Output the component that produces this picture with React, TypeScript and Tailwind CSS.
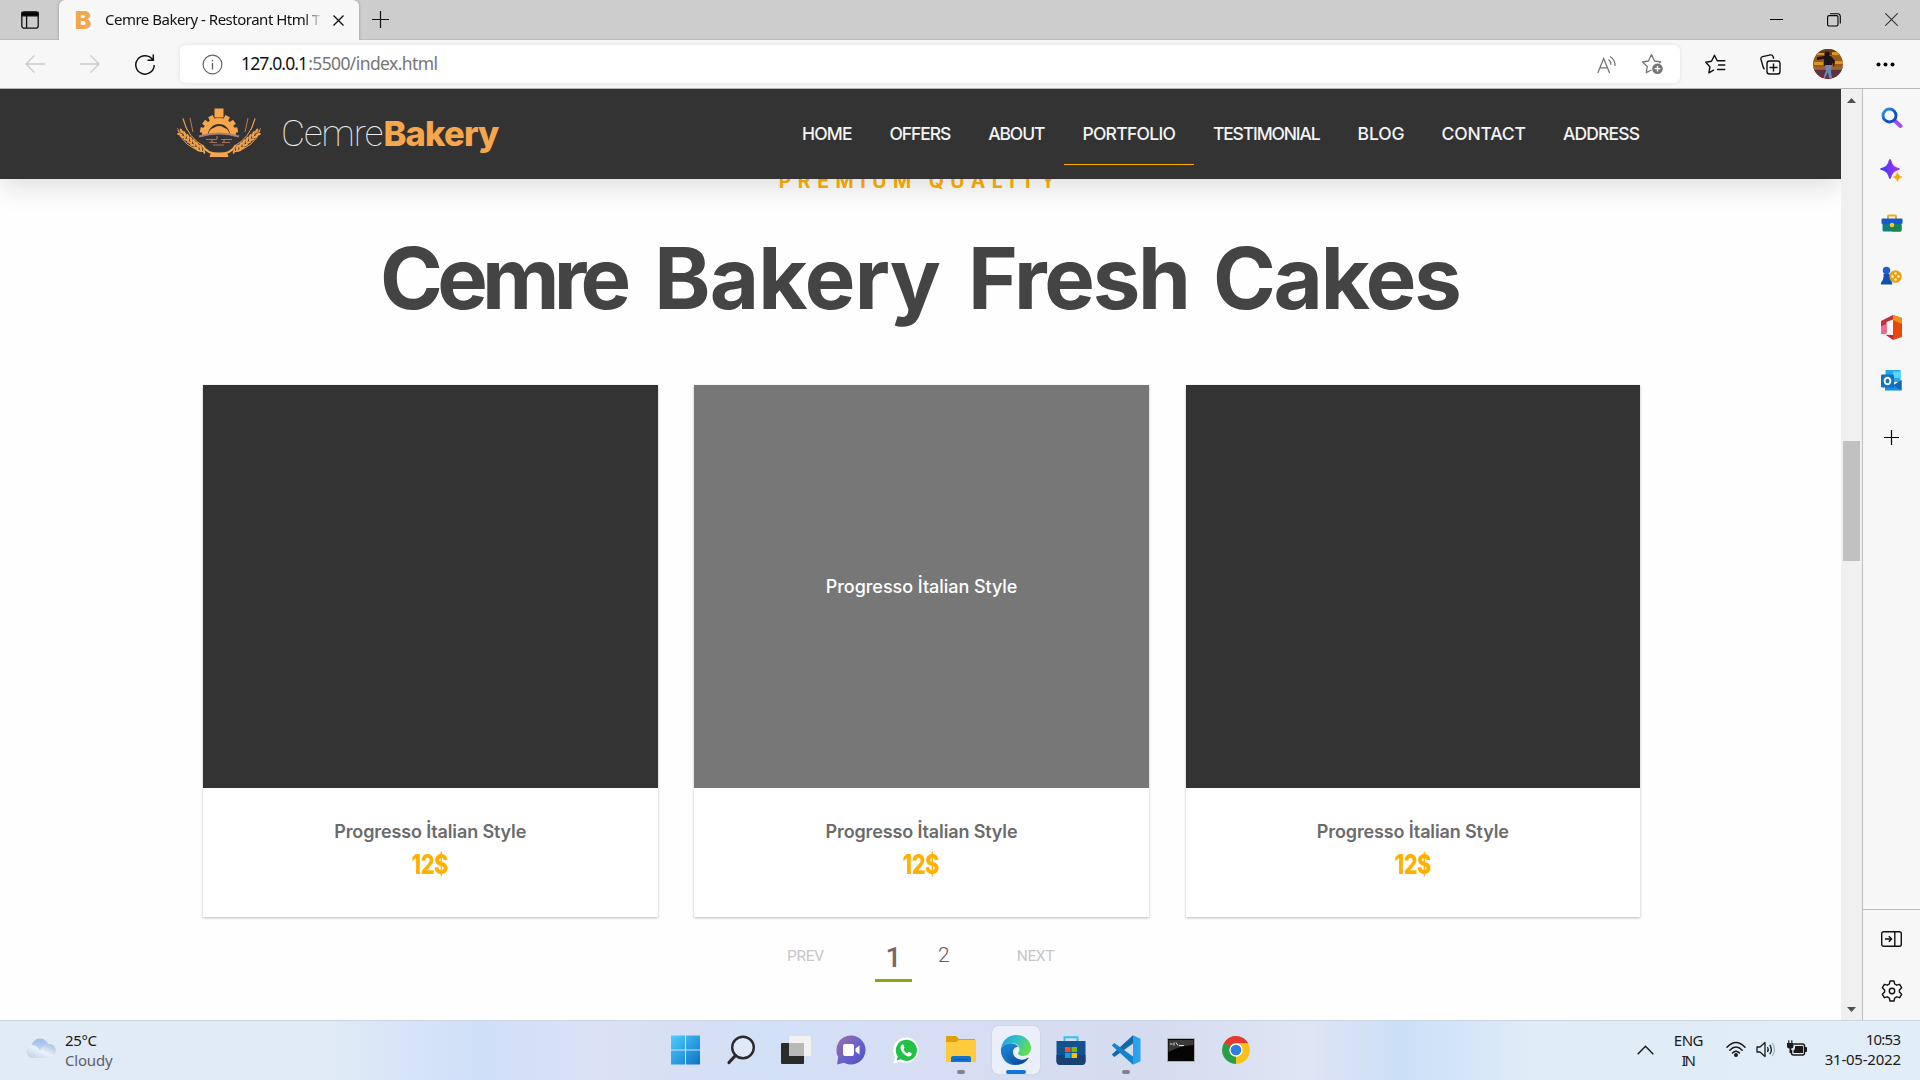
import React, { useLayoutEffect, useRef } from "react";

/* Single-line text whose tracking is adjusted so that it fills a given width. */
function Fit({ w, className = "", children }: { w: number; className?: string; children: string }) {
  const ref = useRef<HTMLSpanElement>(null);
  useLayoutEffect(() => {
    const el = ref.current;
    if (!el) return;
    el.style.letterSpacing = "0px";
    const natural = el.offsetWidth;
    const gap = (w - natural) / (children.length - 1 || 1);
    el.style.letterSpacing = `${gap}px`;
    el.style.marginRight = `${-gap}px`;
  }, [w, children]);
  return (
    <span ref={ref} className={"inline-block whitespace-pre " + className}>
      {children}
    </span>
  );
}

function TitleBar() {
  return (
    <div className="flex h-10 shrink-0 items-stretch border-b border-[#bdbdbd] bg-[#cdcdcd]">
      <div className="flex w-[59px] items-center pl-[21px]">
        <svg width="18" height="18" viewBox="0 0 18 18" fill="none" stroke="#111" strokeWidth="1.3">
          <rect x=".8" y=".8" width="16.4" height="16.4" rx="2.5" />
          <path d="M1 1.5h16v3.4H1z" fill="#000" />
          <path d="M5.6 5v12" />
        </svg>
      </div>
      <div className="-mb-px flex w-[300px] items-center rounded-t-md bg-[#f7f7f7] pl-[14px] shadow-[0_0_3px_rgba(0,0,0,0.3)] [clip-path:inset(-3px_-3px_0_-3px)]">
        <div className="flex h-5 w-5 items-center justify-center bg-white font-['Inter'] text-[25px] leading-5 font-black text-[#f7a64c]">B</div>
        <div className="ml-3 h-6 w-[217px] [mask-image:linear-gradient(90deg,#000_92%,transparent)]">
          <Fit w={215} className="-translate-y-px font-['Noto_Sans'] text-[15px] leading-6 text-[#111]">Cemre Bakery - Restorant Html T</Fit>
        </div>
        <svg className="ml-[11px]" width="11" height="11" viewBox="0 0 11 11" stroke="#111" strokeWidth="1.4">
          <path d="M.5.5l10 10M10.5.5l-10 10" />
        </svg>
      </div>
      <div className="flex items-center pl-[13px]">
        <svg width="17" height="17" viewBox="0 0 17 17" stroke="#111" strokeWidth="1.2">
          <path d="M8.5 0v17M0 8.5h17" />
        </svg>
      </div>
      <div className="ml-auto flex items-center pr-[22px]">
        <svg className="mr-[44px]" width="13" height="13" viewBox="0 0 13 13" stroke="#000"><path d="M0 6.5h13" /></svg>
        <svg className="mr-[44px]" width="14" height="14" viewBox="0 0 14 14" fill="none" stroke="#000" strokeWidth="1.1">
          <rect x=".6" y="2.6" width="10.4" height="10.4" rx="1.5" />
          <path d="M3 .7h7.5q2.8 0 2.8 2.8v7" />
        </svg>
        <svg width="13" height="13" viewBox="0 0 13 13" stroke="#333" strokeWidth="1.1"><path d="M.3.3l12.4 12.4M12.7.3L.3 12.7" /></svg>
      </div>
    </div>
  );
}

function Avatar() {
  return (
    <svg width="30" height="30" viewBox="0 0 30 30">
      <clipPath id="av"><circle cx="15" cy="15" r="15" /></clipPath>
      <g clipPath="url(#av)">
        <path fill="#9a5a18" d="M0 0h30v30H0z" />
        <path fill="#6d3a12" d="M0 0h30v6H0z" />
        <path fill="#d8951f" d="M4 4h8v2H4zM19 3h7v3h-7zM1 13h9v3H1zM21 12h9v3h-9z" />
        <path fill="#5b3443" d="M0 21h30v9H0z" />
        <path fill="#a0643a" d="M0 18h30v2H0z" />
        <circle cx="14" cy="5" r="2.6" fill="#20130f" />
        <path fill="#1d1519" d="M4 8l7-1h7l4 5-1 6-2-5v4h-8v-7l-7 1z" />
        <path fill="#6f86b8" d="M12 16h7l-1 7 1 6h-3l-1-6-3 6h-2l3-7z" />
        <path fill="#b01225" d="M7 27h4v2H7z" />
      </g>
    </svg>
  );
}

function Toolbar() {
  return (
    <div className="flex h-[49px] shrink-0 items-center border-b border-[#b5b5b5] bg-[#f7f7f7]">
      <div className="flex w-[180px] items-center pl-[25px]">
        <svg width="20" height="18" viewBox="0 0 20 18" fill="none" stroke="#cacaca" strokeWidth="1.3"><path d="M20 9H1M9.5.5L1 9l8.5 8.5" /></svg>
        <svg className="ml-[35px]" width="20" height="18" viewBox="0 0 20 18" fill="none" stroke="#cacaca" strokeWidth="1.3"><path d="M0 9h19M10.5.5L19 9l-8.5 8.5" /></svg>
        <svg className="ml-[35px]" width="20" height="21" viewBox="0 0 20 21" fill="none" stroke="#111" strokeWidth="1.5"><path d="M17.8 6A9.2 9.2 0 1 0 19.2 11M18.3.5v5.800h-5.800" /></svg>
      </div>
      <div className="flex h-[38px] w-[1500px] items-center rounded-md bg-white pl-[22px] shadow-[0_0_4px_rgba(0,0,0,0.1)]">
        <svg width="21" height="21" viewBox="0 0 21 21" fill="none" stroke="#666" strokeWidth="1.2">
          <circle cx="10.5" cy="10.5" r="9.4" />
          <path d="M10.5 9v6.500M10.5 5.700v1.500" strokeWidth="1.4" />
        </svg>
        <div className="-mt-[3px] ml-[18px] flex font-['Noto_Sans'] text-[17.5px] leading-6">
          <Fit w={67} className="text-[#111]">127.0.0.1</Fit>
          <Fit w={130} className="text-[#757575]">:5500/index.html</Fit>
        </div>
        <div className="mr-[16px] ml-auto flex items-center">
          <svg width="20" height="19" viewBox="0 0 20 19" fill="none" stroke="#777" strokeWidth="1.3">
            <path d="M.8 18L6.700 3.500 12.600 18M3 12.800h7.500M11.500 4.500q2.500 2 2.300 5.200M13 1.500q5.500 3.500 5 9.500" />
          </svg>
          <svg className="ml-[24px]" width="23" height="22" viewBox="0 0 23 22" fill="none" stroke="#777" strokeWidth="1.3" strokeLinejoin="round">
            <path d="M10.500 17l-5.200 2.700 1-6.300L1.500 9l6-1 3-6.500 3 6.500 6.200.8-1.500 1.500" />
            <circle cx="16.500" cy="15.700" r="5.300" fill="#777" stroke="none" />
            <path d="M16.500 12.900v5.600M13.700 15.700h5.600" stroke="#fff" />
          </svg>
        </div>
      </div>
      <div className="flex flex-1 items-center pl-[25px]">
        <svg width="21" height="20" viewBox="0 0 21 20" fill="none" stroke="#111" strokeWidth="1.4" strokeLinejoin="round" strokeLinecap="round">
          <path d="M8.500 16.200l-4.600 2.600 1-6L.8 8.300l5.700-1L9.500 1.200l2.700 5.500h7.600M13.500 11h6.300M12.500 15.500h7.300" />
        </svg>
        <svg className="ml-[34px]" width="21" height="21" viewBox="0 0 21 21" fill="none" stroke="#111" strokeWidth="1.4">
          <rect x="7" y="7" width="13" height="13" rx="2.5" />
          <path d="M13.500 9.500v8M9.500 13.500h8M4.500 15.200Q3.300 14 3 12.500L.9 5.200Q.6 3.300 2.600 2.600L10.500.9q1.800-.2 2.600 1.600l.6 2.200" />
        </svg>
        <div className="ml-[32px]"><Avatar /></div>
        <div className="ml-[34px] flex gap-[4px]">
          {[0, 1, 2].map((i) => <i key={i} className="h-[3px] w-[3px] rounded-full bg-black ring-[0.5px] ring-black" />)}
        </div>
      </div>
    </div>
  );
}

function Emblem() {
  const grains = [0, 1, 2, 3, 4, 5, 6];
  const wheat = (
    <g fill="#f2a24b">
      <path d="M1 22q5 17 26 22M6 11q5 19 22 28" fill="none" stroke="#f2a24b" strokeWidth="1" />
      {grains.map((i) => (
        <g key={i} transform={`translate(${4.5 + i * 3.2} ${23 + i * 2.7})`}>
          <ellipse rx="2.800" ry="1.200" transform="rotate(62)" />
          <ellipse cx="-.5" cy="3.700" rx="2.900" ry="1.100" transform="rotate(18)" />
          <ellipse cx="5" cy="-1.800" rx="2.600" ry="1" transform="rotate(72)" />
        </g>
      ))}
      <path d="M0 20l4 5M6 10l4 12M13 10l3 14" stroke="#f2a24b" strokeWidth=".7" />
    </g>
  );
  return (
    <svg width="84" height="50" viewBox="0 0 84 50">
      {wheat}
      <g transform="translate(84 0) scale(-1 1)">{wheat}</g>
      <circle cx="42" cy="27" r="19" fill="#333" />
      <path d="M25 27a17 17 0 0 1 34 0h-6a11 11 0 0 0-22 0z" fill="#f7a64c" />
      {[-80, -54, -27, 0, 27, 54, 80].map((a) => (
        <path key={a} d={a === 0 ? "M37.500.500h9v9h-9z" : "M39.500 6h5v5h-5z"} fill="#f7a64c" transform={`rotate(${a} 42 25)`} />
      ))}
      <path d="M31.500 26q1-5 5-6 6-4 11 0 4 1 5 6z" fill="#f7a64c" />
      <path d="M44 13q5 2 6 6" stroke="#f7a64c" fill="none" />
      <path d="M22 28.500q20-6 40 0" fill="none" stroke="#a98078" strokeWidth="2" />
      <path d="M29 31.500h11m4 0h11M32 34.500h8m5 0h8M36 37h11M40 28v3m-5 0v3m12-3v3" fill="none" stroke="#a3705a" strokeWidth="1.200" />
      <path d="M25 37q5 9 17 9t17-9" fill="none" stroke="#f7a64c" strokeWidth="2" />
      <path d="M34 44.500h16l1.500 4.500h-19z" fill="#f7a64c" />
    </svg>
  );
}

const NAV = [
  { label: "HOME", w: 50.5 },
  { label: "OFFERS", w: 61.5 },
  { label: "ABOUT", w: 57.5 },
  { label: "PORTFOLIO", w: 93.3, active: true },
  { label: "TESTIMONIAL", w: 107.5 },
  { label: "BLOG", w: 46.5 },
  { label: "CONTACT", w: 84 },
  { label: "ADDRESS", w: 77 },
];

function SiteHeader() {
  return (
    <header className="relative z-10 flex h-[90px] shrink-0 bg-[#333] pl-[177px] shadow-[0_8px_26px_rgba(0,0,0,0.13)]">
      <div className="flex w-[607px] pt-[19px]">
        <Emblem />
        <div className="mt-px ml-[20px] flex leading-[50px]">
          <Fit w={102} className="font-['Roboto'] text-[37px] font-thin text-[#eee]">Cemre</Fit>
          <Fit w={116} className="font-['Inter'] text-[34.5px] font-extrabold text-[#f7a64c]">Bakery</Fit>
        </div>
      </div>
      <nav className="flex h-[76px]">
        {NAV.map((n) => (
          <a key={n.label} className={"mr-px flex items-center border-b px-[18px] pt-[15px] leading-[30px] " + (n.active ? "border-[#ffab00]" : "border-transparent")}>
            <Fit w={n.w} className="font-['Inter'] text-[17.5px] font-medium text-[#f4f4f4]">{n.label}</Fit>
          </a>
        ))}
      </nav>
    </header>
  );
}

function Card({ hover }: { hover?: boolean }) {
  return (
    <article className="h-[532px] w-[454.6px] bg-white text-center shadow-[0_1px_3px_rgba(0,0,0,0.12),0_1px_2px_rgba(60,80,120,0.24)]">
      <div className={"flex h-[403px] items-center justify-center " + (hover ? "bg-[#777]" : "bg-[#333]")}>
        {hover && <Fit w={192} className="font-['Inter'] text-[18px] leading-6 font-medium text-white">Progresso İtalian Style</Fit>}
      </div>
      <h3 className="mt-[32px] h-6 leading-6">
        <Fit w={192} className="font-['Inter'] text-[18px] font-semibold text-[#6b6b6b]">Progresso İtalian Style</Fit>
      </h3>
      <p className="mt-[6px] pr-px leading-[30px]">
        <span className="inline-block scale-x-[0.8] font-['Inter'] text-[27px] font-extrabold tracking-[-0.5px] text-[#ffb000]">12$</span>
      </p>
    </article>
  );
}

function Site() {
  return (
    <div className="flex min-w-0 flex-1 flex-col overflow-hidden bg-[#fefefe]">
      <SiteHeader />
      <main>
        <p className="-mt-[10px] flex h-6 -translate-x-[5px] justify-center pl-[3px] leading-6">
          <Fit w={277} className="font-['Inter'] text-[19.5px] font-bold text-[#ffb000]">PREMIUM QUALITY</Fit>
        </p>
        <h1 className="mt-[31px] flex h-[110px] pl-[380px] font-['Inter'] text-[85px] leading-[110px] font-bold text-[#444]">
          <Fit w={251}>Cemre</Fit>
          <Fit className="ml-[23px]" w={287}>Bakery</Fit>
          <Fit className="ml-[27px]" w={223}>Fresh</Fit>
          <Fit className="ml-[22px]" w={249}>Cakes</Fit>
        </h1>
        <div className="mt-[51px] flex gap-[36.7px] pl-[203px]">
          <Card />
          <Card hover />
          <Card />
        </div>
        <div className="flex h-[65px] pl-[787px] font-['Roboto'] leading-[30px]">
          <span className="w-[37px] pt-[24px]"><Fit w={37} className="text-[15.5px] text-[#c6c6c6]">PREV</Fit></span>
          <span className="ml-[51px] w-[37px] border-b-[3px] border-[#85aa0a] pt-[26px] text-center text-[28px] font-medium text-[#7b6767]">1</span>
          <span className="ml-[26px] pt-[23px] text-[21px] font-light text-[#6b5757]">2</span>
          <span className="ml-[67px] pt-[24px]"><Fit w={38} className="text-[15.5px] text-[#c6c6c6]">NEXT</Fit></span>
        </div>
      </main>
    </div>
  );
}

function Scrollbar() {
  return (
    <div className="flex w-[22px] flex-col items-center border-r border-[#bcbcbc] bg-[#f0f0f0]">
      <svg className="mt-[9px]" width="9" height="5" viewBox="0 0 9 5"><path d="M0 5L4.500 0 9 5z" fill="#505050" /></svg>
      <div className="mt-[338px] h-[120px] w-[17px] bg-[#c1c1c1]" />
      <svg className="mt-auto mb-[8px]" width="9" height="5" viewBox="0 0 9 5"><path d="M0 0l4.500 5L9 0z" fill="#505050" /></svg>
    </div>
  );
}

function Sidebar() {
  return (
    <aside className="flex w-[57px] flex-col items-center bg-[#f7f7f7]">
      <svg className="mt-[18px]" width="22" height="22" viewBox="0 0 22 22" fill="none">
        <defs><linearGradient id="sg" x1="0" y1="0" x2="1" y2="1"><stop stopColor="#2ea1e6" /><stop offset=".6" stopColor="#0b4fc4" /></linearGradient></defs>
        <path d="M14 14l5.500 5" stroke="#a14cf0" strokeWidth="4" strokeLinecap="round" />
        <circle cx="8.500" cy="8.500" r="6.500" fill="#fff" stroke="url(#sg)" strokeWidth="2.900" />
      </svg>
      <svg className="mt-[30px]" width="23" height="23" viewBox="0 0 23 23">
        <defs><linearGradient id="pg"><stop stopColor="#3b3bff" /><stop offset="1" stopColor="#b52ee8" /></linearGradient></defs>
        <path d="M10 0q1 0 2 4 1.300 3.500 5 4.500 3 .8 3 1.500t-3 1.500q-3.700 1-5 4.500-1 4-2 4t-2-4q-1.300-3.500-5-4.500-3-.8-3-1.500t3-1.500q3.700-1 5-4.500 1-4 2-4z" fill="url(#pg)" />
        <path d="M17.500 13.500q.9 3.700 4.500 4.500-3.600.8-4.500 4.500-.9-3.700-4.500-4.500 3.600-.8 4.500-4.500z" fill="#f2a900" stroke="#f2a900" strokeWidth=".6" />
      </svg>
      <svg className="mt-[31px]" width="22" height="20" viewBox="0 0 22 20">
        <path d="M7 6V3.500Q7 2.500 8 2.500h6q1 0 1 1V6" fill="none" stroke="#eda91d" strokeWidth="2" />
        <rect x="1.500" y="7" width="19" height="11.500" rx="1.500" fill="#0f7f80" /><path d="M11 12h9.500v5q0 1.500-1.500 1.500h-8z" fill="#16864a" />
        <rect x=".5" y="5.500" width="21" height="5.500" rx="1.300" fill="#1757cf" /><circle cx="11" cy="12" r="2.300" fill="#ffc527" />
      </svg>
      <svg className="mt-[33px]" width="23" height="20" viewBox="0 0 23 20">
        <circle cx="15.500" cy="10.500" r="6.300" fill="#e9a018" />
        {[[15.5, 7.5], [15.5, 13.5], [12.5, 10.5], [18.5, 10.5]].map(([x, y]) => <circle key={`${x}-${y}`} cx={x} cy={y} r="1.200" fill="#fff3c9" />)}
        <circle cx="6.500" cy="4.500" r="3.700" fill="#1d5fd0" />
        <path d="M3.500 8h6q-.5 5 2 7.500.8 1 .8 3H.8q0-2 1-3Q4 13 3.500 8z" fill="#124fae" />
      </svg>
      <svg className="mt-[29px]" width="21" height="25" viewBox="0 0 21 25">
        <path d="M0 6l12-6v4.500L5.500 7v11.500L0 19z" fill="#c3303a" /><path d="M0 19V11l5.500-2v9z" fill="#ec6b9a" />
        <path d="M12 0l9 3v19l-9 3V5z" fill="#e8480c" /><path d="M12 0l9 3v6l-9-4z" fill="#f49010" />
        <path d="M4.500 19.800L12 20v5z" fill="#c72540" />
      </svg>
      <svg className="mt-[30px]" width="21" height="21" viewBox="0 0 21 21">
        <path d="M4.500 0h15v12h-15z" fill="#2aa8ea" /><path d="M12 1.500h7.500V8H12z" fill="#50d9ff" />
        <path d="M4 10l8.500 5L20.500 10v10.500H4z" fill="#1590e0" /><path d="M20.500 10l-8 5.500 8 5z" fill="#1366b8" />
        <rect y="4.500" width="13" height="13" rx="1.200" fill="#0f6fc9" />
        <ellipse cx="6.500" cy="11" rx="2.900" ry="3.300" fill="none" stroke="#fff" strokeWidth="1.900" />
      </svg>
      <svg className="mt-[39px]" width="15" height="15" viewBox="0 0 15 15" stroke="#000" strokeWidth="1.200"><path d="M7.500 0v15M0 7.500h15" /></svg>
      <div className="mt-auto flex h-[111px] w-full flex-col items-center border-t border-[#bcbcbc]">
        <svg className="mt-[21px]" width="21" height="16" viewBox="0 0 21 16" fill="none" stroke="#111" strokeWidth="1.400">
          <rect x=".7" y=".7" width="19.600" height="14.600" rx="2" /><path d="M13.800 1v14M4 8h6.500M7.800 5.200L10.600 8l-2.800 2.800" />
        </svg>
        <svg className="mt-[33px]" width="22" height="22" viewBox="0 0 22 22" fill="none" stroke="#111" strokeWidth="1.400" strokeLinejoin="round">
          <path d="M9 1h4l.7 3 2 1.200 3-.9 2 3.500-2.300 2.100v2.200l2.300 2.100-2 3.500-3-.9-2 1.200L13 21H9l-.7-3-2-1.200-3 .9-2-3.500 2.300-2.100V9.900L1.300 7.800l2-3.500 3 .9 2-1.200z" />
          <circle cx="11" cy="11" r="2.700" />
        </svg>
      </div>
    </aside>
  );
}

const TASKS: { id: string; running?: boolean; active?: boolean; icon: React.ReactNode }[] = [
  { id: "start", icon: (
    <svg width="30" height="30" viewBox="0 0 30 30"><defs><linearGradient id="wg" gradientUnits="userSpaceOnUse" x1="0" y1="0" x2="30" y2="30"><stop stopColor="#4fd0fb" /><stop offset="1" stopColor="#0a6fc9" /></linearGradient></defs>
      <path d="M0 .5h14v14H0zM15 .5h14v14H15zM0 15.500h14v14H0zM15 15.500h14v14H15z" fill="url(#wg)" /></svg>) },
  { id: "search", icon: (
    <svg width="30" height="30" viewBox="0 0 30 30" fill="none" stroke="#2a2a2a"><circle cx="17" cy="12.500" r="10.800" fill="#dfe9f8" strokeWidth="2.400" /><path d="M9.500 20.500L3 27.500" strokeWidth="3.200" strokeLinecap="round" /></svg>) },
  { id: "taskview", icon: (
    <svg width="32" height="30" viewBox="0 0 32 30"><rect x="1" y="8" width="23" height="21" rx="1" fill="#2b2b2b" /><rect x="9" y="1" width="22" height="20" rx="1" fill="#f2f2f2" /><path d="M9 8h15v13H9z" fill="#b9b9b9" /></svg>) },
  { id: "chat", icon: (
    <svg width="30" height="30" viewBox="0 0 30 30"><defs><linearGradient id="cg" x1="0" y1="0" x2="1" y2="1"><stop stopColor="#a56aa8" /><stop offset=".5" stopColor="#6b63c4" /><stop offset="1" stopColor="#4a50c8" /></linearGradient></defs>
      <path d="M15 .5a14.500 14.500 0 1 1-7 27.200L1 29.500l1.200-7.500A14.500 14.500 0 0 1 15 .5z" fill="url(#cg)" /><rect x="7" y="9" width="11" height="12" rx="2" fill="#fff" /><path d="M19.500 13.500l4-3v9l-4-3z" fill="#fff" /></svg>) },
  { id: "whatsapp", icon: (
    <svg width="26" height="27" viewBox="0 0 26 27"><path d="M13.200.5a12.700 12.700 0 1 1-6 24L.5 26.500 2.300 20A12.700 12.700 0 0 1 13.200.5z" fill="#fff" /><path d="M13.200 2.700a10.600 10.600 0 1 1-5.600 19.500l-4 1.200 1.200-4A10.600 10.600 0 0 1 13.200 2.700z" fill="#22c045" />
      <path d="M9 7.500q-2 1-1.500 4 1.500 5.500 7 7.700 2.600.8 4-1.200.8-1.500-.2-2L15.800 14.700l-1.500 1.500q-2.700-1.200-3.900-4l1.100-1.500-1-2.700Q10 7 9 7.500z" fill="#fff" /></svg>) },
  { id: "files", running: true, icon: (
    <svg width="32" height="30" viewBox="0 0 32 30"><path d="M1 2q0-1 1-1h9l3 3h16v6H1z" fill="#e0a00a" /><path d="M1 7h10l3-2h17v22H1z" fill="#ffcb3d" /><path d="M6 27v-4q0-2 2-2h16q2 0 2 2v4z" fill="#1173cc" /><path d="M9 24.500h14" stroke="#0a4f96" /></svg>) },
  { id: "edge", active: true, icon: (
    <svg width="32" height="32" viewBox="0 0 32 32"><defs><linearGradient id="e1" x1="0" x2="1" y2=".5"><stop stopColor="#1b9be0" /><stop offset=".5" stopColor="#2fc1c6" /><stop offset="1" stopColor="#62dc52" /></linearGradient><linearGradient id="e2" x1="0" y1="0" x2=".5" y2="1"><stop stopColor="#1f8fe0" /><stop offset="1" stopColor="#0b4f9e" /></linearGradient></defs>
      <path d="M1 15C2 6 9 1 16 1c9 0 15 6 15 13 0 5-4 8-8 8-3 0-5-1-5-2.500 0-1 1.500-1.500 1.500-4C19.500 12 16 9 12 9 6 9 1.500 12.500 1 15z" fill="url(#e1)" />
      <path d="M1 15c1-3.500 6-6 10.500-5.700 3.500.2 6 2 6.500 3.700-3 0-5 2-5 5 0 5 5 8.500 10.500 7.500 2-.3 4-1.500 5.200-2-.5 2-5 7.500-12.700 7.500C6 31 .5 23 1 15z" fill="url(#e2)" />
      <path d="M11 10q-4.500 3-4.500 9.500T15 31Q5 31 2 22 .5 17 1 15q2-4.500 10-5z" fill="#1679c9" opacity=".65" /></svg>) },
  { id: "store", icon: (
    <svg width="30" height="31" viewBox="0 0 30 31"><path d="M8.500 8V2.200h13V8" fill="none" stroke="#35c1f2" strokeWidth="2" /><path d="M.5 6h29v20q0 4-4 4h-21q-4 0-4-4z" fill="#12528e" /><path d="M.5 20h29v6q0 4-4 4h-21q-4 0-4-4z" fill="#1a3f72" /><path d="M9 12h5.500v5H9z" fill="#f25022" /><path d="M15.500 12H21v5h-5.500z" fill="#7fba00" /><path d="M9 18h5.500v5H9z" fill="#00a4ef" /><path d="M15.500 18H21v5h-5.500z" fill="#ffb900" /></svg>) },
  { id: "vscode", running: true, icon: (
    <svg width="30" height="30" viewBox="0 0 30 30"><path d="M.8 19.500L22 .3V8.500L3.300 22z" fill="#1268a6" /><path d="M.8 10.500l2.500-2.500L22 21.500v8.200z" fill="#1583c8" /><path d="M22 .3l7.500 3.500v22.500L22 29.700z" fill="#2ba0ec" /></svg>) },
  { id: "terminal", icon: (
    <svg width="28" height="24" viewBox="0 0 28 24"><rect x=".5" y=".5" width="27" height="23" fill="#050505" stroke="#a9adb3" /><path d="M1.500 2h25v5Q12 8 1.500 14z" fill="#3a3a3a" /><path d="M3 6h2.500M7 4.500v3M9 4.500l2 3M12 7.500h5" stroke="#ddd" /></svg>) },
  { id: "chrome", icon: (
    <svg width="28" height="28" viewBox="0 0 28 28"><path d="M14 14L1.900 7A14 14 0 0 1 26.100 7z" fill="#e33b2e" /><path d="M14 14L26.100 7A14 14 0 0 1 14 28z" fill="#fbc116" /><path d="M14 14v14A14 14 0 0 1 1.900 7z" fill="#2b9f48" /><path d="M14 7h12.100L20 17.500z" fill="#fbc116" /><path d="M8 17.500L1.900 7 12 7z" fill="#2b9f48" /><path d="M3 5.500A14 14 0 0 1 26.100 7H14q-5 0-7 4z" fill="#e33b2e" /><circle cx="14" cy="14" r="6.700" fill="#fff" /><circle cx="14" cy="14" r="5.300" fill="#2f7de9" /></svg>) },
];

function Taskbar() {
  return (
    <footer className="flex h-[60px] shrink-0 border-t border-[#c9d6e6] bg-[linear-gradient(90deg,#e0ebf5_0,#e0ebf6_17%,#cfdff9_25%,#dbe2f5_31%,#d6dff3_36%,#d2e0f7_40%,#d7def3_48%,#d5dcef_60%,#dfe5f4_68%,#cbdff7_73%,#e0edf8_80%,#e1edf7_100%)] font-['Noto_Sans'] text-[15px] leading-5 text-[#1a1a1a]">
      <div className="flex w-[658px] pl-[26px]">
        <svg className="mt-[17px]" width="30" height="21" viewBox="0 0 30 21">
          <defs><linearGradient id="c1" x1="0" y1="0" x2="0" y2="1"><stop stopColor="#9dbcea" /><stop offset="1" stopColor="#cfdff6" /></linearGradient><linearGradient id="c2" x1="1" y1="0" x2="0" y2="1"><stop stopColor="#a3bad6" /><stop offset=".5" stopColor="#e9f0f8" /><stop offset="1" stopColor="#bccde6" /></linearGradient></defs>
          <circle cx="14" cy="9" r="8.500" fill="url(#c1)" /><path d="M7 20a6.500 6.500 0 1 1 5-10.500q1 1 2 3Q17 6 23 6a7 7 0 0 1 0 14z" fill="url(#c2)" />
        </svg>
        <div className="ml-[9px] flex flex-col items-start pt-[9px]">
          <Fit w={32}>25°C</Fit>
          <Fit w={48} className="text-[#5a6068]">Cloudy</Fit>
        </div>
      </div>
      <div className="flex pt-[5px]">
        {TASKS.map((t) => (
          <div key={t.id} className="flex w-[55px] justify-center">
            <div className={"relative flex h-12 w-12 items-center justify-center rounded-md " + (t.active ? "bg-[#ebeffa] shadow-[0_0_1px_rgba(0,0,0,0.25)]" : "")}>
              {t.icon}
              {t.active && <i className="absolute bottom-0 h-1 w-5 rounded-full bg-[#0f78d4]" />}
              {t.running && <i className="absolute bottom-0 h-1 w-2 rounded-full bg-[#7f848c]" />}
            </div>
          </div>
        ))}
      </div>
      <div className="ml-auto flex pr-[19px]">
        <svg className="mt-[24px]" width="17" height="10" viewBox="0 0 17 10" fill="none" stroke="#1a1a1a" strokeWidth="1.500"><path d="M.7 9.200l7.800-8 7.800 8" /></svg>
        <div className="ml-[20px] flex w-[30px] flex-col items-center pt-[9px]"><Fit w={30}>ENG</Fit><Fit w={15}>IN</Fit></div>
        <svg className="mt-[20px] ml-[22px]" width="20" height="16" viewBox="0 0 20 16" fill="none" stroke="#1a1a1a" strokeWidth="1.500" strokeLinecap="round"><path d="M1 6.200q9-9.500 18 0M3.800 9.200q6.200-6.500 12.400 0M6.500 12q3.500-3.600 7 0" /><circle cx="10" cy="14" r="1.200" fill="#1a1a1a" /></svg>
        <svg className="mt-[20px] ml-[10px]" width="20" height="17" viewBox="0 0 20 17" fill="none" stroke="#1a1a1a" strokeWidth="1.300" strokeLinejoin="round"><path d="M1 6h3l5-4.500v14L4 11H1zM11.500 6q1.500 2.500 0 5M13.800 3.800q3 4.700 0 9.400" /><path d="M16.200 1.800q4.500 6.700 0 13.400" stroke="#a9b5c2" /></svg>
        <svg className="mt-[19px] ml-[11px]" width="20" height="17" viewBox="0 0 20 17"><path d="M6.500 4h9q2 0 2 2v7q0 2-2 2h-9q-2 0-2-2v-3" fill="none" stroke="#1a1a1a" strokeWidth="1.500" /><path d="M8 6h8v7H6.500v-2.500Q8 9.500 8 8zM18 7h1.300q.7 0 .7 1v3q0 1-.7 1H18zM0 3h6.500v3q0 2.500-2.300 2.500V13H2.500V8.500Q0 8.500 0 6zM1.200.3h1.200v3H1.200zM4.200.3h1.200v3H4.200z" fill="#1a1a1a" /></svg>
        <div className="ml-[18px] flex flex-col items-end pt-[8px]"><Fit w={35}>10:53</Fit><Fit w={76}>31-05-2022</Fit></div>
      </div>
    </footer>
  );
}

export default function App() {
  return (
    <div className="flex h-[1080px] w-[1920px] flex-col overflow-hidden bg-white">
      <TitleBar />
      <Toolbar />
      <div className="flex min-h-0 flex-1">
        <Site />
        <Scrollbar />
        <Sidebar />
      </div>
      <Taskbar />
    </div>
  );
}
